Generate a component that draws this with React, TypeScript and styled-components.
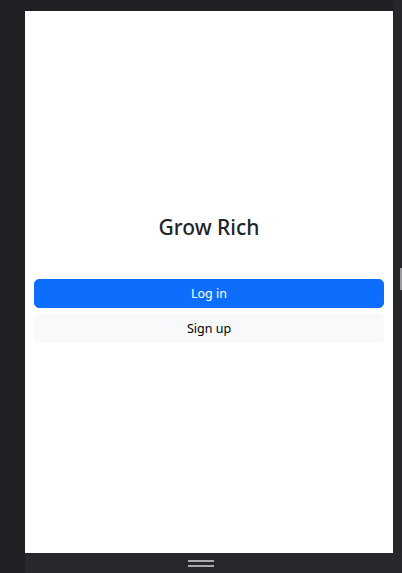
import styled, { createGlobalStyle } from "styled-components";

const Global = createGlobalStyle`
    html, body {
        margin: 0;
        padding: 0;
        background: #202124;
    }
    * {
        box-sizing: border-box;
    }
`;

const Frame = styled.div`
    width: 402px;
    height: 573px;
    display: grid;
    grid-template-columns: 25px 368px 9px;
    grid-template-rows: 11px 542px 20px;
    background: #202124;
    font-family: "Noto Sans", "Open Sans", sans-serif;
`;

const Gutter = styled.div<{ $tone?: string }>`
    background: ${(p) => p.$tone ?? "#202124"};
`;

const RightEdge = styled.div`
    background: #26272b;
    display: flex;
    align-items: center;
    justify-content: flex-end;
    padding-bottom: 6px;
`;

const EdgeGrip = styled.div`
    width: 2px;
    height: 22px;
    background: #9a9b9f;
`;

const BottomBar = styled.div`
    grid-column: 2 / 4;
    background: #27282c;
    display: flex;
    justify-content: center;
    padding-top: 7px;
    padding-right: 198px;
`;

const Handle = styled.div`
    display: flex;
    flex-direction: column;
    gap: 3px;
    margin-left: 172px;

    span {
        display: block;
        width: 26px;
        height: 2px;
        background: #a9aaae;
    }
`;

const Panel = styled.div`
    background: #ffffff;
    display: flex;
    flex-direction: column;
    align-items: stretch;
    padding: 202px 9px 0;
`;

const Title = styled.h1`
    margin: 0;
    text-align: center;
    font-size: 21px;
    font-weight: 500;
    line-height: 28px;
    color: #212529;
`;

const Actions = styled.div`
    display: flex;
    flex-direction: column;
    gap: 6px;
    margin-top: 38px;
`;

const Button = styled.button<{ $primary?: boolean }>`
    height: 29px;
    padding-top: 2px;
    border: 1px solid ${(p) => (p.$primary ? "#0d6efd" : "#f8f9fa")};
    border-radius: 5px;
    background: ${(p) => (p.$primary ? "#0d6efd" : "#f8f9fa")};
    color: ${(p) => (p.$primary ? "#ffffff" : "#000000")};
    font-family: inherit;
    font-size: 12.5px;
    line-height: 1;
    cursor: pointer;
`;

export default function App() {
    return (
        <>
            <Global />
            <Frame>
                <Gutter />
                <Gutter />
                <Gutter $tone="#26272b" />
                <Gutter />
                <Panel>
                    <Title>Grow Rich</Title>
                    <Actions>
                        <Button $primary>Log in</Button>
                        <Button>Sign up</Button>
                    </Actions>
                </Panel>
                <RightEdge>
                    <EdgeGrip />
                </RightEdge>
                <Gutter />
                <BottomBar>
                    <Handle>
                        <span />
                        <span />
                    </Handle>
                </BottomBar>
            </Frame>
        </>
    );
}
